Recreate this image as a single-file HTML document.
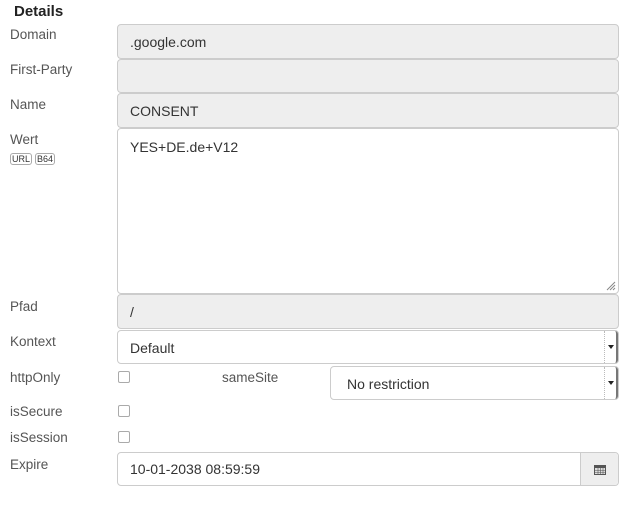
<!DOCTYPE html><html><head><style>
body{margin:0;width:625px;height:511px;background:#fff;font-family:"Liberation Sans",sans-serif;position:relative;overflow:hidden}
.a{position:absolute}
.l{position:absolute;left:10px;font-size:13.5px;color:#555}
.i{position:absolute;left:117px;width:502px;box-sizing:border-box;border:1px solid #ccc;border-radius:4px;font-size:14px;color:#333;padding-left:12px}
.g{background:#eee}
.cb{position:absolute;left:118px;width:10px;height:10px;border:1px solid #aaa;border-radius:2px}
.sel .ar{position:absolute;right:0;top:0;bottom:0;width:11px;border-left:1px dotted #bbb;border-right:2px solid #777;border-radius:0 3px 3px 0}
.ar:after{content:"";position:absolute;left:3px;top:14px;border:3px solid transparent;border-top:4px solid #222}
.tag{display:inline-block;font-size:9px;border:1px solid #aaa;border-radius:3px;padding:0 1px;color:#333;margin-right:3px}
</style></head><body>
<div class="a" style="left:14px;top:3px;font-size:15px;font-weight:bold;color:#222">Details</div>
<div class="l" style="top:27px">Domain</div>
<div class="i g" style="top:24px;height:35px;line-height:35px">.google.com</div>
<div class="l" style="top:62px">First-Party</div>
<div class="i g" style="top:59px;height:34px"></div>
<div class="l" style="top:97px">Name</div>
<div class="i g" style="top:93px;height:35px;line-height:35px">CONSENT</div>
<div class="l" style="top:132px">Wert</div>
<div class="a" style="left:10px;top:149px"><span class="tag">URL</span><span class="tag">B64</span></div>
<div class="i" style="top:128px;height:166px;padding-top:10px">YES+DE.de+V12
<svg class="a" style="right:2px;bottom:2px" width="10" height="10"><path d="M9 1L1 9M9 4L4 9M9 7L7 9" stroke="#888"/></svg></div>
<div class="l" style="top:299px">Pfad</div>
<div class="i g" style="top:294px;height:35px;line-height:35px">/</div>
<div class="l" style="top:334px">Kontext</div>
<div class="i sel" style="top:330px;height:34px;line-height:35px">Default<div class="ar"></div></div>
<div class="l" style="top:370px">httpOnly</div>
<div class="cb" style="top:371px"></div>
<div class="a" style="left:222px;top:370px;font-size:13.5px;color:#555">sameSite</div>
<div class="i sel" style="left:330px;width:289px;top:366px;height:34px;line-height:35px;padding-left:16px">No restriction<div class="ar"></div></div>
<div class="l" style="top:404px">isSecure</div>
<div class="cb" style="top:405px"></div>
<div class="l" style="top:430px">isSession</div>
<div class="cb" style="top:431px"></div>
<div class="l" style="top:457px">Expire</div>
<div class="i" style="top:452px;height:34px;line-height:33px">10-01-2038 08:59:59
<div class="a" style="right:0;top:0;bottom:0;width:37px;background:#eee;border-left:1px solid #ccc;border-radius:0 4px 4px 0">
<svg class="a" style="left:13px;top:11px" width="12" height="11"><rect x="0" y="1" width="12" height="10" fill="#555"/><rect x="1" y="4" width="10" height="6" fill="#ddd"/><path d="M1 6.5H11M1 8.5H11M4 4V10M6.5 4V10M9 4V10" stroke="#555" stroke-width=".6"/></svg></div></div>
</body></html>
